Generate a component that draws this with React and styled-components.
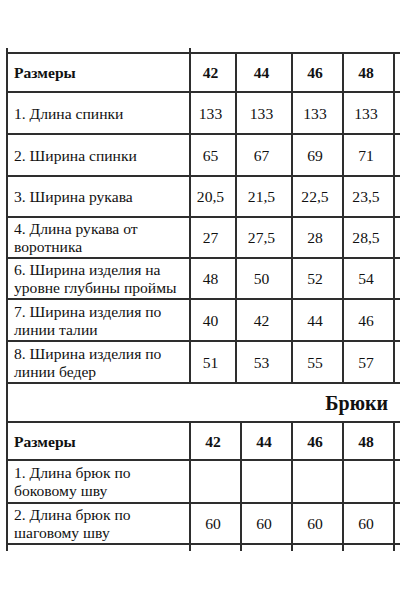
import React from "react";
import styled, { createGlobalStyle } from "styled-components";

const LINE = "#2e2e2e";

const Global = createGlobalStyle`
  html, body { margin: 0; padding: 0; background: #fff; }
  body { overflow: hidden; }
`;

const Page = styled.div`
  width: 400px;
  height: 600px;
  overflow: hidden;
  padding: 48px 0 0 6px;
  box-sizing: border-box;
  font-family: "Liberation Serif", Tinos, "Times New Roman", serif;
  color: #111;
`;

const Sheet = styled.div`
  width: max-content;
  border-left: 2px solid ${LINE};
`;

const Row = styled.div`
  display: grid;
  grid-template-columns: ${(p) => p.$cols};
  height: ${(p) => p.$h}px;
  box-sizing: border-box;
  border-top: ${(p) => (p.$top ? `2px solid ${LINE}` : "none")};
  border-bottom: ${(p) => (p.$stub ? "none" : `2px solid ${LINE}`)};
`;

const Cell = styled.div`
  box-sizing: border-box;
  border-right: ${(p) => (p.$noRight ? "none" : `2px solid ${LINE}`)};
  display: flex;
  align-items: center;
  justify-content: ${(p) => (p.$num ? "center" : "flex-start")};
  padding: ${(p) => (p.$num ? "1px 5px 0 0" : "1px 2px 0 6px")};
  font-size: 15.6px;
  line-height: 18px;
  font-weight: ${(p) => (p.$bold ? 700 : 400)};
`;

const TitleRow = styled.div`
  height: 39px;
  box-sizing: border-box;
  border-bottom: 2px solid ${LINE};
  width: 436px;
  display: flex;
  align-items: center;
  justify-content: flex-end;
  padding: 1px 56px 0 0;
  font-size: 20px;
  font-weight: 700;
`;

const COLS1 = "183px 46px 56px 51px 51px 50px";
const COLS2 = "183px 51px 51px 51px 51px 50px";
const sizes = ["42", "44", "46", "48", ""];

const top = [
  ["1. Длина спинки", ["133", "133", "133", "133"], 42],
  ["2. Ширина спинки", ["65", "67", "69", "71"], 42],
  ["3. Ширина рукава", ["20,5", "21,5", "22,5", "23,5"], 41],
  ["4. Длина рукава от воротника", ["27", "27,5", "28", "28,5"], 41],
  ["6. Ширина изделия на уровне глубины проймы", ["48", "50", "52", "54"], 41],
  ["7. Ширина изделия по линии талии", ["40", "42", "44", "46"], 42],
  ["8. Ширина изделия по линии бедер", ["51", "53", "55", "57"], 42],
];

const bottom = [
  ["1. Длина брюк по боковому шву", ["", "", "", ""], 43],
  ["2. Длина брюк по шаговому шву", ["60", "60", "60", "60"], 41],
];

function DataRow({ cols, label, values, h }) {
  return (
    <Row $cols={cols} $h={h}>
      <Cell>{label}</Cell>
      {values.map((v, i) => (
        <Cell key={i} $num>{v}</Cell>
      ))}
      <Cell $num />
    </Row>
  );
}

function HeaderRow({ cols, h, first }) {
  return (
    <Row $cols={cols} $h={h} $top={first}>
      <Cell $bold>Размеры</Cell>
      {sizes.map((s, i) => (
        <Cell key={i} $num $bold>{s}</Cell>
      ))}
    </Row>
  );
}

export default function App() {
  return (
    <>
      <Global />
      <Page>
        <Sheet>
          <Row $cols={COLS1} $h={4} $stub>
            <Cell />
            <Cell $noRight />
          </Row>
          <HeaderRow cols={COLS1} h={41} first />
          {top.map(([l, v, h]) => (
            <DataRow key={l} cols={COLS1} label={l} values={v} h={h} />
          ))}
          <TitleRow>Брюки</TitleRow>
          <HeaderRow cols={COLS2} h={38} />
          {bottom.map(([l, v, h]) => (
            <DataRow key={l} cols={COLS2} label={l} values={v} h={h} />
          ))}
          <Row $cols={COLS2} $h={6} $stub>
            <Cell />
            <Cell />
            <Cell />
            <Cell />
            <Cell />
            <Cell $noRight />
          </Row>
        </Sheet>
      </Page>
    </>
  );
}
